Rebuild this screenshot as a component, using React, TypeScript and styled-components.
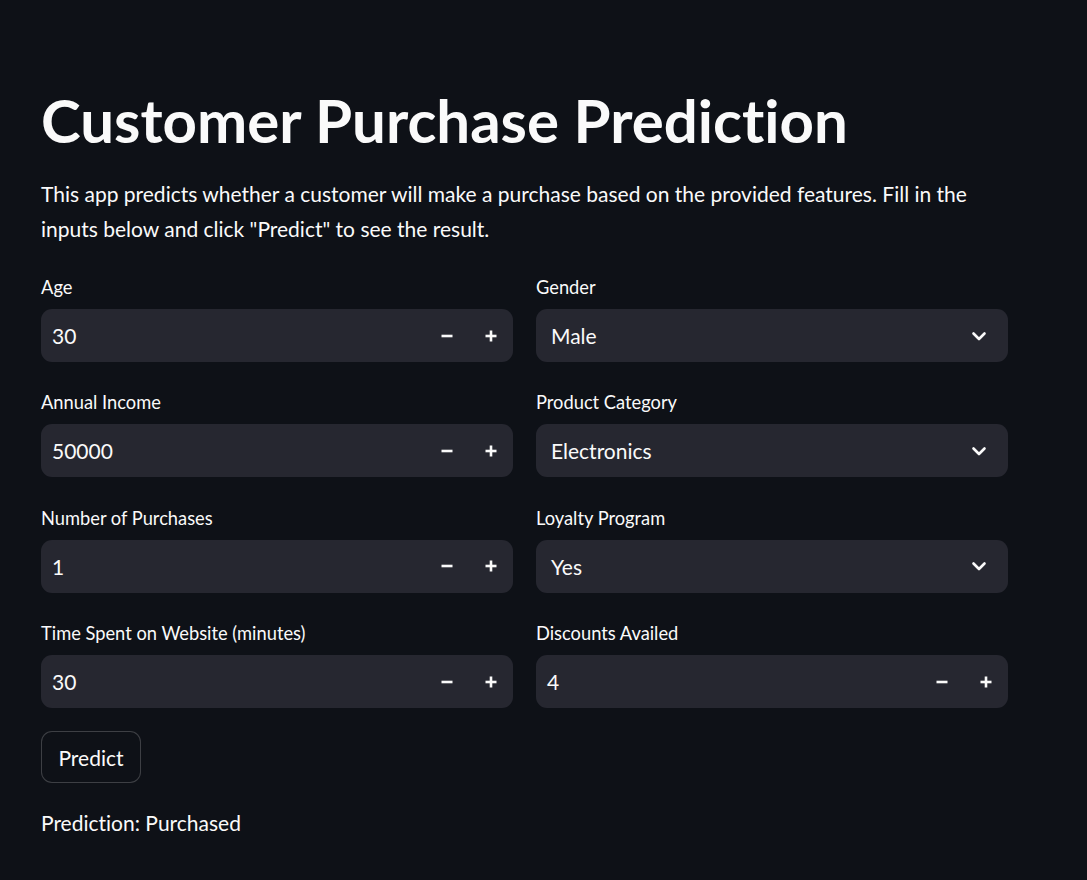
import React from "react";
import styled, { createGlobalStyle } from "styled-components";

const Global = createGlobalStyle`
  html, body { margin: 0; padding: 0; background: #0e1117; }
  body {
    font-family: "Lato", "Noto Sans", sans-serif;
    color: #fafafa;
    font-variant-ligatures: none;
    font-feature-settings: "liga" 0, "clig" 0;
  }
  * { box-sizing: border-box; }
`;

const Page = styled.main`
  min-height: 880px;
  background: #0e1117;
  padding: 84px 41px 40px 41px;
  display: flex;
  flex-direction: column;
`;

const Title = styled.h1`
  margin: 0;
  font-size: 60px;
  font-weight: 700;
  line-height: 72px;
  color: #fafafa;
`;

const Intro = styled.p`
  margin: 20px 0 0 0;
  width: 967px;
  font-size: 21px;
  line-height: 35px;
  color: #fafafa;
`;

const FormGrid = styled.div`
  margin-top: 28px;
  display: grid;
  grid-template-columns: 472px 472px;
  column-gap: 23px;
  row-gap: 27.4px;
`;

const Field = styled.div`
  display: flex;
  flex-direction: column;
`;

const Label = styled.label`
  font-size: 18.3px;
  line-height: 26px;
  height: 26px;
  margin-bottom: 9px;
  color: #fafafa;
`;

const Box = styled.div<{ $pad: number }>`
  height: 53px;
  background: #262730;
  border-radius: 11px;
  display: flex;
  align-items: center;
  padding-left: ${(p) => p.$pad}px;
  font-size: 21px;
  color: #fafafa;
`;

const Value = styled.span`
  flex: 1;
`;

const StepButton = styled.button`
  width: 44px;
  height: 53px;
  border: none;
  background: transparent;
  color: #fafafa;
  display: flex;
  align-items: center;
  justify-content: center;
  padding: 0;
  cursor: pointer;
`;

const ChevronWrap = styled.span`
  width: 58px;
  display: flex;
  align-items: center;
  justify-content: center;
`;

const PredictButton = styled.button`
  margin-top: 23px;
  align-self: flex-start;
  width: 100px;
  height: 52px;
  border: 1px solid rgba(250, 250, 250, 0.2);
  border-radius: 11px;
  background: #0e1117;
  color: #fafafa;
  font-family: inherit;
  font-variant-ligatures: none;
  font-size: 21px;
  cursor: pointer;
`;

const Result = styled.p`
  margin: 22px 0 0 0;
  font-size: 21px;
  line-height: 35px;
  color: #fafafa;
`;

const Minus = () => (
  <svg width="14" height="14" viewBox="0 0 14 14">
    <line x1="1.5" y1="7" x2="12.5" y2="7" stroke="#fafafa" strokeWidth="2.6" />
  </svg>
);

const Plus = () => (
  <svg width="14" height="14" viewBox="0 0 14 14">
    <line x1="1.5" y1="7" x2="12.5" y2="7" stroke="#fafafa" strokeWidth="2.6" />
    <line x1="7" y1="1.5" x2="7" y2="12.5" stroke="#fafafa" strokeWidth="2.6" />
  </svg>
);

const Chevron = () => (
  <svg width="16" height="16" viewBox="0 0 16 16">
    <path d="M2.5 5.5 L8 11 L13.5 5.5" fill="none" stroke="#fafafa" strokeWidth="2.6" strokeLinecap="round" strokeLinejoin="round" />
  </svg>
);

const NumberInput = ({ label, value }: { label: string; value: string }) => (
  <Field>
    <Label>{label}</Label>
    <Box $pad={11}>
      <Value>{value}</Value>
      <StepButton aria-label="decrement"><Minus /></StepButton>
      <StepButton aria-label="increment"><Plus /></StepButton>
    </Box>
  </Field>
);

const SelectInput = ({ label, value }: { label: string; value: string }) => (
  <Field>
    <Label>{label}</Label>
    <Box $pad={15}>
      <Value>{value}</Value>
      <ChevronWrap><Chevron /></ChevronWrap>
    </Box>
  </Field>
);

export default function App() {
  return (
    <>
      <Global />
      <Page>
        <Title>Customer Purchase Prediction</Title>
        <Intro>
          This app predicts whether a customer will make a purchase based on the provided features. Fill in the
          inputs below and click "Predict" to see the result.
        </Intro>
        <FormGrid>
          <NumberInput label="Age" value="30" />
          <SelectInput label="Gender" value="Male" />
          <NumberInput label="Annual Income" value="50000" />
          <SelectInput label="Product Category" value="Electronics" />
          <NumberInput label="Number of Purchases" value="1" />
          <SelectInput label="Loyalty Program" value="Yes" />
          <NumberInput label="Time Spent on Website (minutes)" value="30" />
          <NumberInput label="Discounts Availed" value="4" />
        </FormGrid>
        <PredictButton>Predict</PredictButton>
        <Result>Prediction: Purchased</Result>
      </Page>
    </>
  );
}
